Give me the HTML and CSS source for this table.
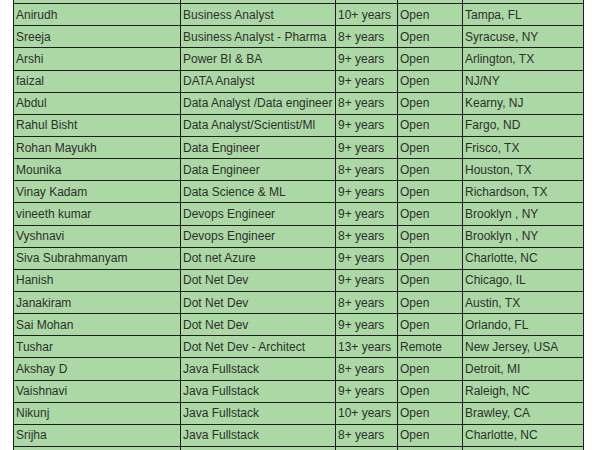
FILE: index.html
```html
<!DOCTYPE html>
<html>
<head>
<meta charset="utf-8">
<link rel="stylesheet" href="styles.css">
</head>
<body>
<div class="wrap">
<table class="grid">
<colgroup>
<col class="c1"><col class="c2"><col class="c3"><col class="c4"><col class="c5">
</colgroup>
<tbody>
<tr><td>&nbsp;</td><td>&nbsp;</td><td>&nbsp;</td><td>&nbsp;</td><td>&nbsp;</td></tr>
<tr><td>Anirudh</td><td>Business Analyst</td><td>10+ years</td><td>Open</td><td>Tampa, FL</td></tr>
<tr><td>Sreeja</td><td>Business Analyst - Pharma</td><td>8+ years</td><td>Open</td><td>Syracuse, NY</td></tr>
<tr><td>Arshi</td><td>Power BI &amp; BA</td><td>9+ years</td><td>Open</td><td>Arlington, TX</td></tr>
<tr><td>faizal</td><td>DATA Analyst</td><td>9+ years</td><td>Open</td><td>NJ/NY</td></tr>
<tr><td>Abdul</td><td>Data Analyst /Data engineer</td><td>8+ years</td><td>Open</td><td>Kearny, NJ</td></tr>
<tr><td>Rahul Bisht</td><td>Data Analyst/Scientist/Ml</td><td>9+ years</td><td>Open</td><td>Fargo, ND</td></tr>
<tr><td>Rohan Mayukh</td><td>Data Engineer</td><td>9+ years</td><td>Open</td><td>Frisco, TX</td></tr>
<tr><td>Mounika</td><td>Data Engineer</td><td>8+ years</td><td>Open</td><td>Houston, TX</td></tr>
<tr><td>Vinay Kadam</td><td>Data Science &amp; ML</td><td>9+ years</td><td>Open</td><td>Richardson, TX</td></tr>
<tr><td>vineeth kumar</td><td>Devops Engineer</td><td>9+ years</td><td>Open</td><td>Brooklyn , NY</td></tr>
<tr><td>Vyshnavi</td><td>Devops Engineer</td><td>8+ years</td><td>Open</td><td>Brooklyn , NY</td></tr>
<tr><td>Siva Subrahmanyam</td><td>Dot net Azure</td><td>9+ years</td><td>Open</td><td>Charlotte, NC</td></tr>
<tr><td>Hanish</td><td>Dot Net Dev</td><td>9+ years</td><td>Open</td><td>Chicago, IL</td></tr>
<tr><td>Janakiram</td><td>Dot Net Dev</td><td>8+ years</td><td>Open</td><td>Austin, TX</td></tr>
<tr><td>Sai Mohan</td><td>Dot Net Dev</td><td>9+ years</td><td>Open</td><td>Orlando, FL</td></tr>
<tr><td>Tushar</td><td>Dot Net Dev - Architect</td><td>13+ years</td><td>Remote</td><td>New Jersey, USA</td></tr>
<tr><td>Akshay D</td><td>Java Fullstack</td><td>8+ years</td><td>Open</td><td>Detroit, MI</td></tr>
<tr><td>Vaishnavi</td><td>Java Fullstack</td><td>9+ years</td><td>Open</td><td>Raleigh, NC</td></tr>
<tr><td>Nikunj</td><td>Java Fullstack</td><td>10+ years</td><td>Open</td><td>Brawley, CA</td></tr>
<tr><td>Srijha</td><td>Java Fullstack</td><td>8+ years</td><td>Open</td><td>Charlotte, NC</td></tr>
<tr><td>&nbsp;</td><td>&nbsp;</td><td>&nbsp;</td><td>&nbsp;</td><td>&nbsp;</td></tr>
</tbody>
</table>
</div>
</body>
</html>
```

FILE: styles.css
```css
html, body {
  margin: 0;
  padding: 0;
  background: #ffffff;
  overflow: hidden;
}
.wrap {
  padding-left: 13px;
  margin-top: -19px;
}
.grid {
  border-collapse: collapse;
  table-layout: fixed;
  width: 570px;
  background: #acd8a6;
  font-family: "Liberation Sans", Arial, sans-serif;
  font-size: 12px;
  color: #2e2e2e;
}
.c1 { width: 167px; }
.c2 { width: 155px; }
.c3 { width: 62px; }
.c4 { width: 65px; }
.c5 { width: 121px; }
.grid td {
  border: 1px solid #1f1f1f;
  height: 21.15px;
  padding: 0 2px;
  white-space: nowrap;
  overflow: hidden;
  vertical-align: middle;
  line-height: 14px;
}
```
